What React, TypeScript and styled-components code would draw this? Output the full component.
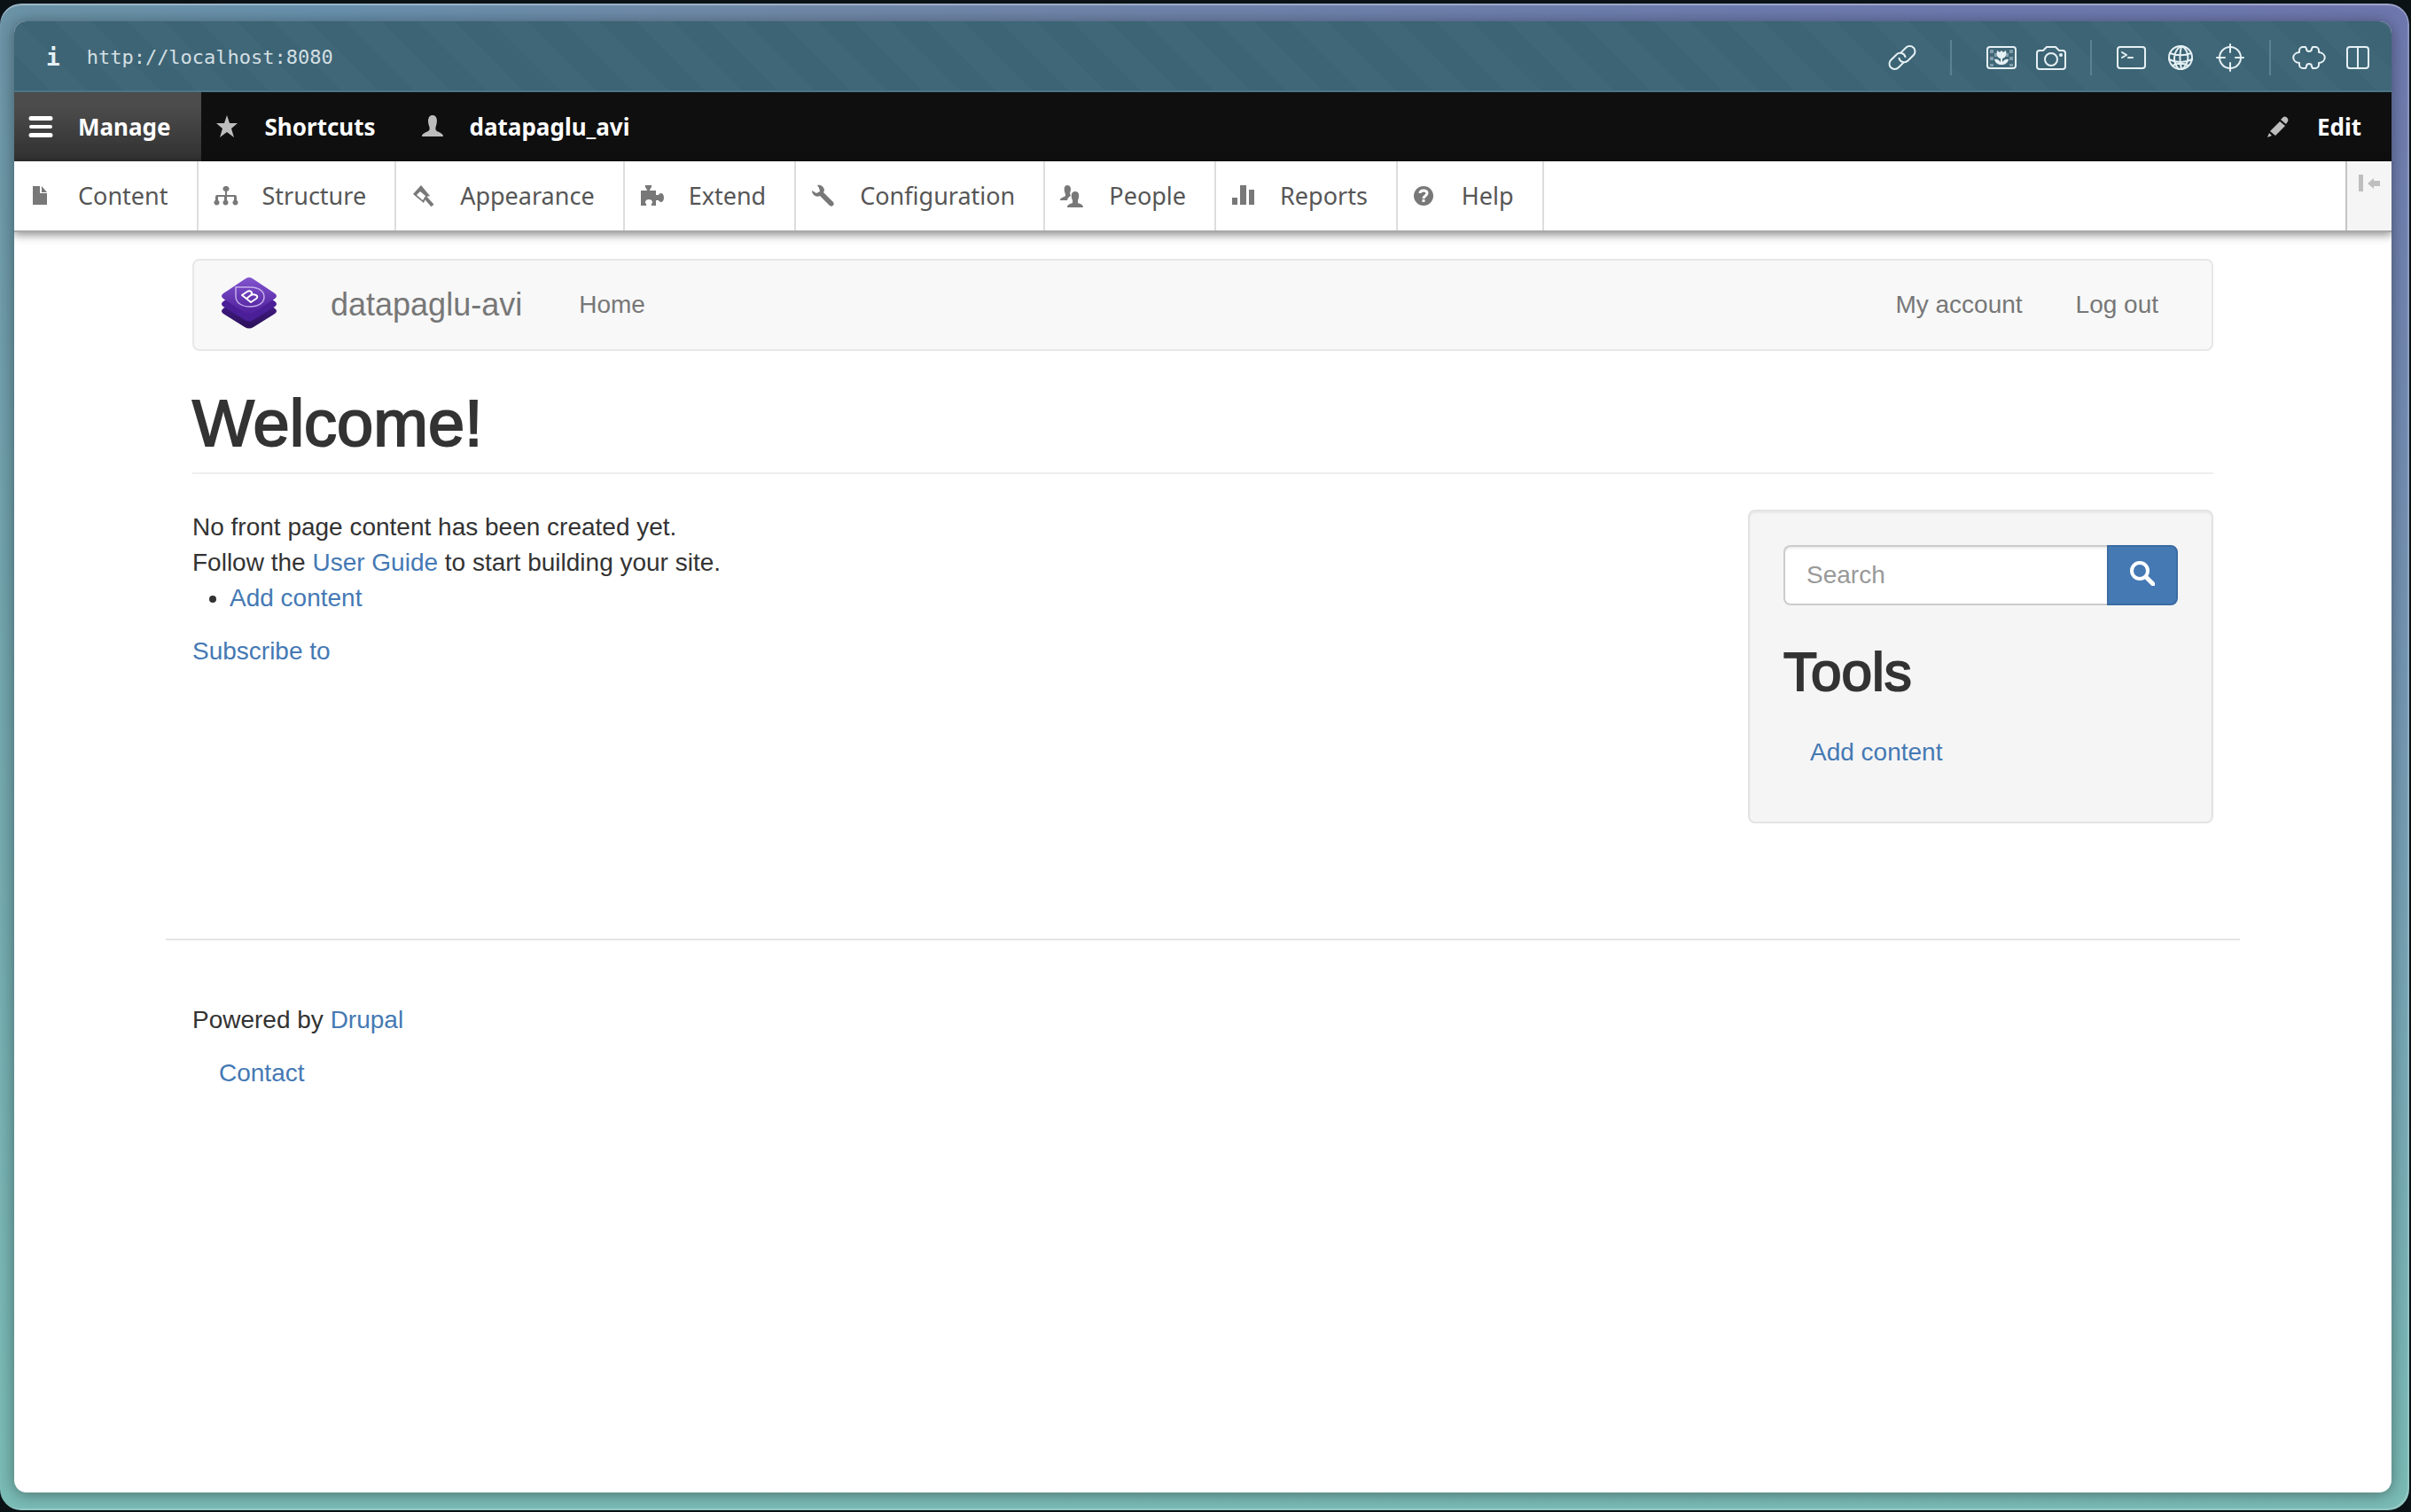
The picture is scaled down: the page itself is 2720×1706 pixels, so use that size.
import React from "react";
import styled, { createGlobalStyle } from "styled-components";

const SANS = '"Helvetica Neue", "Liberation Sans", Arial, sans-serif';
const TOOLBAR = '"Noto Sans", "Open Sans", sans-serif';
const MONO = '"DejaVu Sans Mono", "Liberation Mono", monospace';

const GlobalStyle = createGlobalStyle`
  *, *::before, *::after { box-sizing: border-box; }
  body {
    margin: 0;
    background: #0a1216;
    color: #333;
    font: 28px/40px ${SANS};
  }
  ul { margin: 0; padding: 0; list-style: none; }
  p { margin: 0; }
`;

const Desktop = styled.div`
  min-height: 100vh;
  display: flex;
  padding: 4px 2px 2px 0;
`;

const Frame = styled.div`
  flex: 1;
  display: flex;
  padding: 20px;
  padding-left: 16px;
  border-radius: 24px;
  background:
    linear-gradient(180deg, rgba(122, 190, 182, 0) 0%, rgba(122, 188, 182, 1) 100%),
    linear-gradient(90deg, #6b93a6 0%, #6890ad 14%, #7089a8 32%, #6c7aae 75%, #6e77ae 100%);
  box-shadow: inset 0 2px 1px rgba(255, 255, 255, 0.35), inset -2px -2px 1px rgba(255, 255, 255, 0.2);
`;

const Browser = styled.div`
  flex: 1;
  display: flex;
  flex-direction: column;
  overflow: hidden;
  border-radius: 14px;
  background: #fff;
  box-shadow: 0 2px 18px rgba(0, 0, 0, 0.4);
`;

const AddressBar = styled.header`
  height: 80px;
  display: flex;
  align-items: center;
  padding: 4px 24px 0 36px;
  gap: 30px;
  color: #e6f1f5;
  border-bottom: 2px solid #4c7486;
  background: repeating-linear-gradient(45deg, #3c6474 0 29px, #406778 29px 58px);
`;

const Info = styled.button`
  padding: 0;
  border: 0;
  background: none;
  color: inherit;
  font: bold 26px/40px ${MONO};
`;

const Address = styled.input`
  flex: 1;
  min-width: 0;
  padding: 0;
  border: 0;
  outline: 0;
  background: none;
  color: #d3dfe3;
  font: 22px/40px ${MONO};
`;

const Tools = styled.div`
  display: flex;
  align-items: center;
`;

const ToolGroup = styled.div<{ $lead?: number }>`
  display: flex;
  align-items: center;
  gap: 20px;
  padding-left: ${(p) => p.$lead ?? 24}px;
  padding-right: 26px;
  border-right: 2px solid #5b8293;
  height: 40px;
  &:first-child { padding-right: 38px; }
  &:last-child { gap: 22px; border: 0; padding-right: 0; }
`;

const ToolButton = styled.button`
  display: flex;
  padding: 0;
  border: 0;
  background: none;
  color: inherit;
`;

const AdminBar = styled.nav`
  display: flex;
  height: 78px;
  background: #0f0f0f;
`;

const AdminTab = styled.a<{ $active?: boolean; $end?: boolean }>`
  display: flex;
  align-items: center;
  gap: 26px;
  padding: 0 34px 0 16px;
  margin-left: ${(p) => (p.$end ? "auto" : "0")};
  color: #fff;
  font: bold 26px/40px ${TOOLBAR};
  text-decoration: none;
  background: ${(p) => (p.$active ? "linear-gradient(#4c4c4c 20%, #303030)" : "none")};
  svg { color: ${(p) => (p.$active ? "#fff" : "#bdbdbd")}; }
`;

const Tray = styled.nav`
  position: relative;
  display: flex;
  height: 78px;
  background: #fff;
  box-shadow: 0 2px 0 #a9a9a9, 0 4px 10px 1px rgba(0, 0, 0, 0.45);
`;

const TrayLink = styled.a`
  display: flex;
  align-items: center;
  gap: 26px;
  padding: 0 32px 0 16px;
  border-right: 2px solid #ddd;
  color: #565656;
  font: 27px/40px ${TOOLBAR};
  text-decoration: none;
  svg { color: #787878; }
`;

const Orientation = styled.button`
  margin-left: auto;
  width: 52px;
  display: flex;
  justify-content: center;
  padding: 15px 0 0;
  border: 0;
  border-left: 2px solid #c4c4c4;
  background: #f5f5f5;
  color: #bebebe;
`;

const Container = styled.div`
  width: 100%;
  max-width: 2340px;
  margin: 0 auto;
  padding: 32px 30px 0;
`;

const Navbar = styled.nav`
  display: flex;
  align-items: center;
  height: 104px;
  padding: 0 30px;
  border: 2px solid #e7e7e7;
  border-radius: 8px;
  background: #f8f8f8;
  a { color: #777; text-decoration: none; }
`;

const LogoLink = styled.a`
  display: flex;
  margin-right: 60px;
  padding-bottom: 4px;
`;

const Brand = styled.a`
  font-size: 36px;
  margin-right: 34px;
`;

const NavLink = styled.a`
  padding: 0 30px;
`;

const Account = styled.div`
  margin-left: auto;
`;

const Title = styled.h1`
  margin: 42px 0 40px;
  padding-bottom: 16px;
  border-bottom: 2px solid #eee;
  font-size: 74px;
  line-height: 79px;
  font-weight: 400;
  -webkit-text-stroke: 2px #333;
`;

const Columns = styled.div`
  display: grid;
  grid-template-columns: repeat(12, 1fr);
  gap: 60px;
  align-items: start;
`;

const Main = styled.main`
  grid-column: span 9;
`;

const Link = styled.a`
  color: #4579b4;
  text-decoration: none;
`;

const Bullets = styled.ul`
  margin-bottom: 20px;
  padding-left: 42px;
  list-style: disc;
`;

const Well = styled.aside`
  grid-column: span 3;
  margin-bottom: 40px;
  padding: 38px;
  border: 2px solid #e3e3e3;
  border-radius: 8px;
  background: #f5f5f5;
  box-shadow: inset 0 2px 2px rgba(0, 0, 0, 0.05);
`;

const SearchForm = styled.form`
  display: flex;
  height: 68px;
  margin-bottom: 40px;
`;

const SearchInput = styled.input`
  flex: 1;
  min-width: 0;
  padding: 0 24px;
  border: 2px solid #ccc;
  border-right: 0;
  border-radius: 8px 0 0 8px;
  background: #fff;
  box-shadow: inset 0 2px 2px rgba(0, 0, 0, 0.08);
  font: 28px/40px ${SANS};
  &::placeholder { color: #999; opacity: 1; }
`;

const SearchButton = styled.button`
  width: 80px;
  display: flex;
  align-items: center;
  justify-content: center;
  padding: 0 0 4px;
  border: 2px solid #3b6ba2;
  border-radius: 0 8px 8px 0;
  background: #4579b4;
  color: #fff;
`;

const WellTitle = styled.h2`
  margin: 0 0 18px;
  padding-top: 2px;
  font-size: 62px;
  line-height: 66px;
  font-weight: 400;
  -webkit-text-stroke: 2px #333;
`;

const Menu = styled.ul`
  padding: 20px 30px;
`;

const Footer = styled.footer`
  width: 100%;
  max-width: 2340px;
  margin: 90px auto 0;
  padding: 70px 30px 0;
  border-top: 2px solid #e5e5e5;
`;

type IconProps = { w?: number; h?: number; box?: string; children: React.ReactNode };

const Solid = ({ w = 32, h = 40, box, children }: IconProps) => (
  <svg width={w} height={h} viewBox={box ?? `0 0 ${w} ${h}`} fill="currentColor" aria-hidden="true">
    {children}
  </svg>
);

const Line = ({ w = 36, h = 40, box, children }: IconProps) => (
  <svg
    width={w}
    height={h}
    viewBox={box ?? `0 0 ${w} ${h}`}
    fill="none"
    stroke="currentColor"
    strokeWidth="2"
    strokeLinejoin="round"
    strokeLinecap="round"
    aria-hidden="true"
  >
    {children}
  </svg>
);

const trayItems: { label: string; icon: React.ReactNode }[] = [
  {
    label: "Content",
    icon: <path d="M5 9h8v8h8v13H5zM15 9l6 7h-6z" />,
  },
  {
    label: "Structure",
    icon: (
      <path d="M15 9a3 3 0 0 1 1 6v4h9a2 2 0 0 1 2 2v4a3 3 0 1 1-3 0v-4h-8v4a3 3 0 1 1-3 0v-4H6v4a3 3 0 1 1-3 0v-4a2 2 0 0 1 2-2h9v-4a3 3 0 0 1 1-6z" />
    ),
  },
  {
    label: "Appearance",
    icon: (
      <>
        <path fillRule="evenodd" d="M12 8l10 12-4 1-3 7L3 18zM11 15l-4 4 7 6 3-5z" />
        <path d="M17 22l8 9" stroke="currentColor" strokeWidth="4" />
      </>
    ),
  },
  {
    label: "Extend",
    icon: (
      <path d="M7 8h7c1 2-2 4-2 6h7v5h3c1-3 6-3 6 3s-5 6-6 3h-3v6h-5c-1-2 1-2 1-4 0-4-8-4-8 0 0 2 2 2 1 4H2V14h7c0-2-3-4-2-6z" />
    ),
  },
  {
    label: "Configuration",
    icon: (
      <path d="M8 8c4-1 8 2 8 6l-1 2 11 11c2 3-1 6-4 4L11 20c-4 2-9-1-9-6l5 3 4-2-1-4z" />
    ),
  },
  {
    label: "People",
    icon: (
      <path d="M9 8c4 0 5 4 3 9l1 3c-2 1-3 2-4 5H1c0-3 3-3 6-5v-2c-2-4-2-10 2-10zM18 15c5 0 5 6 3 10v3c3 1 6 2 6 5H9c0-3 3-4 6-5v-3c-2-4-2-10 3-10z" />
    ),
  },
  {
    label: "Reports",
    icon: <path d="M2 22h6v8H2zM11 8h7v22h-7zM21 13h6v17h-6z" />,
  },
  {
    label: "Help",
    icon: (
      <>
        <circle cx="13" cy="20" r="11" />
        <path d="M9 17c0-4 8-4 8 0 0 3-4 3-4 6M13 24v3" fill="none" stroke="#fff" strokeWidth="3" />
      </>
    ),
  },
];

const Logo = () => (
  <svg width="64" height="60" viewBox="0 0 64 60" aria-label="Home">
    <defs>
      <linearGradient id="top" x1="0" y1="0" x2="0" y2="1">
        <stop offset="0" stopColor="#8255cf" />
        <stop offset="1" stopColor="#4f1f9c" />
      </linearGradient>
      <linearGradient id="base" x1="0" y1="0" x2="0" y2="1">
        <stop offset="0.4" stopColor="#3f1a80" />
        <stop offset="1" stopColor="#2b1058" />
      </linearGradient>
    </defs>
    <path d="M3 36Q-1 39 3 42L27 57q5 3 10 0L61 42q4-3 0-6L37 19H27z" fill="url(#base)" />
    <path d="M3 28Q-1 31 3 34L27 49q5 3 10 0L61 34q4-3 0-6L37 11H27z" fill="#4b1f97" />
    <path d="M3 19Q-1 22 3 25L27 41q5 3 10 0L61 25q4-3 0-6L37 3q-5-4-10 0z" fill="url(#top)" />
    <path d="M17 12h16c9 0 16 4 16 11s-7 11-16 11-16-4-16-12z" fill="none" stroke="#c5aeea" strokeWidth="1.5" />
    <path
      d="M24 21l6-4c3-2 7 1 4 4 4-2 10 1 6 4l-6 4zM29 25l5-4"
      fill="none"
      stroke="#fff"
      strokeWidth="2"
      strokeLinejoin="round"
    />
  </svg>
);

export default function App() {
  return (
    <>
      <GlobalStyle />
      <Desktop>
        <Frame>
          <Browser>
            <AddressBar>
              <Info aria-label="Site information">i</Info>
              <Address aria-label="Address" defaultValue="http://localhost:8080" />
              <Tools>
                <ToolGroup $lead={0}>
                  <ToolButton aria-label="Copy link">
                    <Line w={32}>
                      <g transform="rotate(-45 16 20)">
                        <path d="M13 25H5a6 6 0 0 1 0-12h9a6 6 0 0 1 5 9" />
                        <path d="M19 15h8a6 6 0 0 1 0 12h-9a6 6 0 0 1-5-9" />
                      </g>
                    </Line>
                  </ToolButton>
                </ToolGroup>
                <ToolGroup $lead={38}>
                  <ToolButton aria-label="Image">
                    <Line>
                      <rect x="2" y="8" width="32" height="24" rx="3" />
                      <path
                        d="M5 11h4v4H5zM27 11h4v4h-4zM5 19h4v4H5zM27 19h4v4h-4zM5 27h4v3H5zM27 27h4v3h-4zM10 15h3v4h-3zM23 15h3v4h-3z"
                        fill="currentColor"
                        stroke="none"
                        opacity="0.4"
                      />
                      <path
                        d="M13 12l3 2 2-2 2 2 3-2c1 5 0 8-4 9v4c2-3 5-4 7-3-1 4-4 6-8 6s-7-2-8-6c2-1 5 0 7 3v-4c-4-1-5-4-4-9z"
                        fill="currentColor"
                        stroke="none"
                      />
                    </Line>
                  </ToolButton>
                  <ToolButton aria-label="Screenshot">
                    <Line>
                      <path d="M5 12h4l4-4h10l4 4h4a3 3 0 0 1 3 3v15a3 3 0 0 1-3 3H5a3 3 0 0 1-3-3V15a3 3 0 0 1 3-3z" />
                      <circle cx="18" cy="22" r="7" />
                      <circle cx="29" cy="17" r="1" fill="currentColor" />
                    </Line>
                  </ToolButton>
                </ToolGroup>
                <ToolGroup $lead={26}>
                  <ToolButton aria-label="Terminal">
                    <Line>
                      <rect x="3" y="8" width="31" height="24" rx="3" />
                      <path d="M8 14l5 3-5 3M15 20h5" />
                    </Line>
                  </ToolButton>
                  <ToolButton aria-label="Network">
                    <Line>
                      <circle cx="18" cy="20" r="13" />
                      <path d="M18 7c-9 7-9 19-2 26M20 7c9 7 8 19 0 26M19 7c-2 8-2 18 0 26M6 15c8 3 16 3 24 0M5 22c8 4 18 4 26 0M9 29c6-3 12-3 18 0" />
                    </Line>
                  </ToolButton>
                  <ToolButton aria-label="Inspect">
                    <Line>
                      <circle cx="18" cy="20" r="12" />
                      <path d="M18 5v9M18 26v9M3 20h9M24 20h9" />
                    </Line>
                  </ToolButton>
                </ToolGroup>
                <ToolGroup>
                  <ToolButton aria-label="Extensions">
                    <Line w={38}>
                      <path d="M8 14v-2a4 4 0 0 1 4-4h3l1 2a3 3 0 0 0 6 0l1-2h3a4 4 0 0 1 4 4v2c9 1 9 11 0 12v2a4 4 0 0 1-4 4h-3l-1-2a3 3 0 0 0-6 0l-1 2h-3a4 4 0 0 1-4-4v-2c-9-1-9-11 0-12z" />
                    </Line>
                  </ToolButton>
                  <ToolButton aria-label="Split view">
                    <Line w={28}>
                      <rect x="2" y="8" width="24" height="24" rx="3" />
                      <path d="M14 8v24" />
                    </Line>
                  </ToolButton>
                </ToolGroup>
              </Tools>
            </AddressBar>

            <AdminBar aria-label="Administration">
              <AdminTab href="#manage" $active>
                <Solid w={30}>
                  <path d="M3 8h22a2 2 0 0 1 0 5H3a2 2 0 0 1 0-5zM3 18h22a2 2 0 0 1 0 4H3a2 2 0 0 1 0-4zM3 27h22a2 2 0 0 1 0 5H3a2 2 0 0 1 0-5z" />
                </Solid>
                Manage
              </AdminTab>
              <AdminTab href="#shortcuts">
                <Solid w={30}>
                  <path d="M13 7l3 9h9l-7 6 3 10-8-6-8 6 3-10-7-6h9z" />
                </Solid>
                Shortcuts
              </AdminTab>
              <AdminTab href="#user">
                <Solid w={30}>
                  <path d="M14 7c5 0 6 6 4 12-1 2-1 5 1 6 4 2 7 3 7 6H2c0-3 3-4 7-6 2-1 2-4 1-6-2-6-1-12 4-12z" />
                </Solid>
                datapaglu_avi
              </AdminTab>
              <AdminTab href="#edit" $end>
                <Solid w={30}>
                  <path d="M18 9c2-2 7 2 5 5l-2 3-6-5zM14 14l6 5-11 11-6-5zM2 27l3 3-5 2z" />
                </Solid>
                Edit
              </AdminTab>
            </AdminBar>

            <Tray aria-label="Manage">
              {trayItems.map((item) => (
                <TrayLink key={item.label} href={`#${item.label.toLowerCase()}`}>
                  <Solid w={30}>{item.icon}</Solid>
                  {item.label}
                </TrayLink>
              ))}
              <Orientation aria-label="Vertical orientation">
                <Solid w={26} h={20}>
                  <path d="M1 0h5v19H1zM11 10l7-6v3h7v6h-7v3z" />
                </Solid>
              </Orientation>
            </Tray>

            <Container>
              <Navbar aria-label="Main">
                <LogoLink href="#home">
                  <Logo />
                </LogoLink>
                <Brand href="#home">datapaglu-avi</Brand>
                <NavLink href="#home">Home</NavLink>
                <Account>
                  <NavLink href="#account">My account</NavLink>
                  <NavLink href="#logout">Log out</NavLink>
                </Account>
              </Navbar>
              <Title>Welcome!</Title>
              <Columns>
                <Main>
                  <p>No front page content has been created yet.</p>
                  <p>
                    Follow the <Link href="#guide">User Guide</Link> to start building your site.
                  </p>
                  <Bullets>
                    <li>
                      <Link href="#add">Add content</Link>
                    </li>
                  </Bullets>
                  <Link href="#feed">Subscribe to</Link>
                </Main>
                <Well>
                  <SearchForm role="search">
                    <SearchInput type="search" aria-label="Search" placeholder="Search" />
                    <SearchButton type="button" aria-label="Search">
                      <svg width="28" height="28" viewBox="0 0 28 28" fill="none" stroke="currentColor" strokeWidth="4" strokeLinecap="round">
                        <circle cx="11" cy="11" r="9" />
                        <path d="M18 18l8 8" strokeWidth="5" />
                      </svg>
                    </SearchButton>
                  </SearchForm>
                  <WellTitle>Tools</WellTitle>
                  <Menu>
                    <li>
                      <Link href="#add">Add content</Link>
                    </li>
                  </Menu>
                </Well>
              </Columns>
            </Container>

            <Footer>
              <p>
                Powered by <Link href="#drupal">Drupal</Link>
              </p>
              <Menu>
                <li>
                  <Link href="#contact">Contact</Link>
                </li>
              </Menu>
            </Footer>
          </Browser>
        </Frame>
      </Desktop>
    </>
  );
}
